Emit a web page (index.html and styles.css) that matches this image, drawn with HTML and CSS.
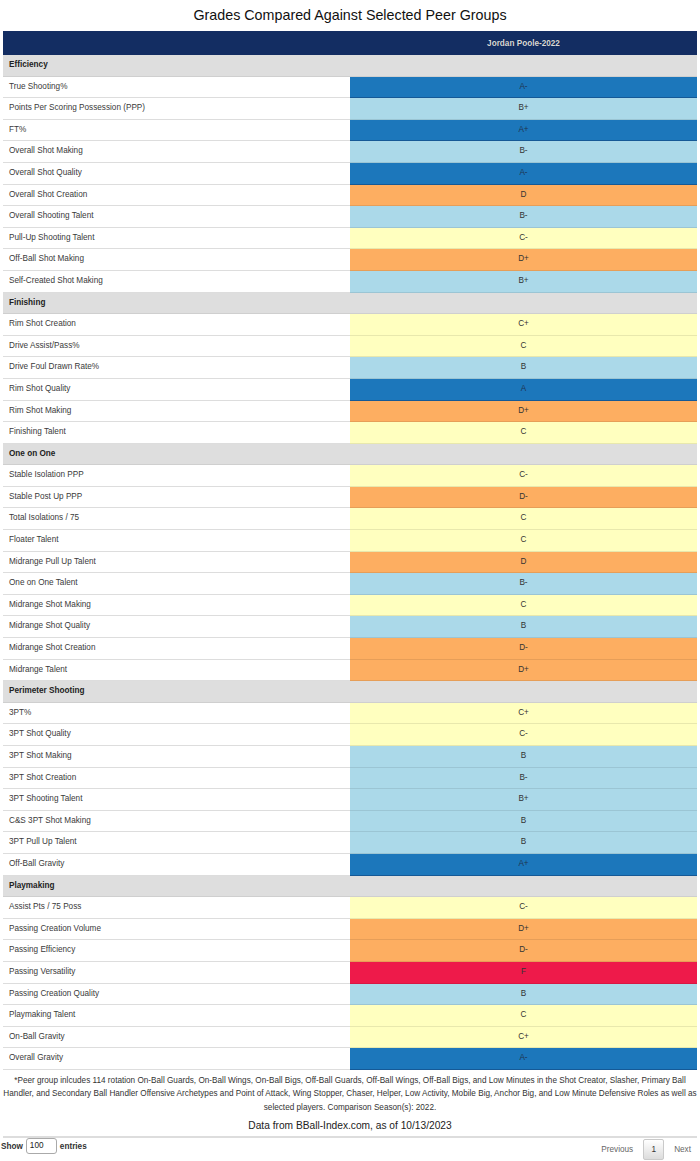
FILE: index.html
```html
<!DOCTYPE html>
<html>
<head>
<meta charset="utf-8">
<link rel="stylesheet" href="styles.css">
</head>
<body>
<div class="page">
  <h1 class="title">Grades Compared Against Selected Peer Groups</h1>
  <table class="grades">
    <thead>
      <tr><th class="h-metric"></th><th class="h-player">Jordan Poole-2022</th></tr>
    </thead>
    <tbody>
      <tr class="section"><td colspan="2">Efficiency</td></tr>
      <tr><td class="metric">True Shooting%</td><td class="g ga">A-</td></tr>
      <tr><td class="metric">Points Per Scoring Possession (PPP)</td><td class="g gb">B+</td></tr>
      <tr><td class="metric">FT%</td><td class="g ga">A+</td></tr>
      <tr><td class="metric">Overall Shot Making</td><td class="g gb">B-</td></tr>
      <tr><td class="metric">Overall Shot Quality</td><td class="g ga">A-</td></tr>
      <tr><td class="metric">Overall Shot Creation</td><td class="g gd">D</td></tr>
      <tr><td class="metric">Overall Shooting Talent</td><td class="g gb">B-</td></tr>
      <tr><td class="metric">Pull-Up Shooting Talent</td><td class="g gc">C-</td></tr>
      <tr><td class="metric">Off-Ball Shot Making</td><td class="g gd">D+</td></tr>
      <tr><td class="metric">Self-Created Shot Making</td><td class="g gb">B+</td></tr>

      <tr class="section"><td colspan="2">Finishing</td></tr>
      <tr><td class="metric">Rim Shot Creation</td><td class="g gc">C+</td></tr>
      <tr><td class="metric">Drive Assist/Pass%</td><td class="g gc">C</td></tr>
      <tr><td class="metric">Drive Foul Drawn Rate%</td><td class="g gb">B</td></tr>
      <tr><td class="metric">Rim Shot Quality</td><td class="g ga">A</td></tr>
      <tr><td class="metric">Rim Shot Making</td><td class="g gd">D+</td></tr>
      <tr><td class="metric">Finishing Talent</td><td class="g gc">C</td></tr>

      <tr class="section"><td colspan="2">One on One</td></tr>
      <tr><td class="metric">Stable Isolation PPP</td><td class="g gc">C-</td></tr>
      <tr><td class="metric">Stable Post Up PPP</td><td class="g gd">D-</td></tr>
      <tr><td class="metric">Total Isolations / 75</td><td class="g gc">C</td></tr>
      <tr><td class="metric">Floater Talent</td><td class="g gc">C</td></tr>
      <tr><td class="metric">Midrange Pull Up Talent</td><td class="g gd">D</td></tr>
      <tr><td class="metric">One on One Talent</td><td class="g gb">B-</td></tr>
      <tr><td class="metric">Midrange Shot Making</td><td class="g gc">C</td></tr>
      <tr><td class="metric">Midrange Shot Quality</td><td class="g gb">B</td></tr>
      <tr><td class="metric">Midrange Shot Creation</td><td class="g gd">D-</td></tr>
      <tr><td class="metric">Midrange Talent</td><td class="g gd">D+</td></tr>

      <tr class="section"><td colspan="2">Perimeter Shooting</td></tr>
      <tr><td class="metric">3PT%</td><td class="g gc">C+</td></tr>
      <tr><td class="metric">3PT Shot Quality</td><td class="g gc">C-</td></tr>
      <tr><td class="metric">3PT Shot Making</td><td class="g gb">B</td></tr>
      <tr><td class="metric">3PT Shot Creation</td><td class="g gb">B-</td></tr>
      <tr><td class="metric">3PT Shooting Talent</td><td class="g gb">B+</td></tr>
      <tr><td class="metric">C&amp;S 3PT Shot Making</td><td class="g gb">B</td></tr>
      <tr><td class="metric">3PT Pull Up Talent</td><td class="g gb">B</td></tr>
      <tr><td class="metric">Off-Ball Gravity</td><td class="g ga">A+</td></tr>

      <tr class="section"><td colspan="2">Playmaking</td></tr>
      <tr><td class="metric">Assist Pts / 75 Poss</td><td class="g gc">C-</td></tr>
      <tr><td class="metric">Passing Creation Volume</td><td class="g gd">D+</td></tr>
      <tr><td class="metric">Passing Efficiency</td><td class="g gd">D-</td></tr>
      <tr><td class="metric">Passing Versatility</td><td class="g gf">F</td></tr>
      <tr><td class="metric">Passing Creation Quality</td><td class="g gb">B</td></tr>
      <tr><td class="metric">Playmaking Talent</td><td class="g gc">C</td></tr>
      <tr><td class="metric">On-Ball Gravity</td><td class="g gc">C+</td></tr>
      <tr><td class="metric">Overall Gravity</td><td class="g ga">A-</td></tr>
    </tbody>
  </table>
  <p class="note">*Peer group inlcudes 114 rotation On-Ball Guards, On-Ball Wings, On-Ball Bigs, Off-Ball Guards, Off-Ball Wings, Off-Ball Bigs, and Low Minutes in the Shot Creator, Slasher, Primary Ball Handler, and Secondary Ball Handler Offensive Archetypes and Point of Attack, Wing Stopper, Chaser, Helper, Low Activity, Mobile Big, Anchor Big, and Low Minute Defensive Roles as well as selected players. Comparison Season(s): 2022.</p>
  <p class="source">Data from BBall-Index.com, as of 10/13/2023</p>
  <div class="controls">
    <div class="length">Show <span class="len-input">100</span> entries</div>
    <div class="paging">
      <span class="pg-link">Previous</span>
      <span class="pg-btn">1</span>
      <span class="pg-link">Next</span>
    </div>
  </div>
</div>
</body>
</html>
```

FILE: styles.css
```css
html, body {
  margin: 0;
  padding: 0;
  background: #ffffff;
}
body {
  font-family: "Liberation Sans", Arial, sans-serif;
  color: #333333;
}
.page {
  padding: 0 3px;
}
.title {
  margin: 0;
  height: 31px;
  line-height: 30px;
  font-size: 14.3px;
  font-weight: normal;
  text-align: center;
  color: #111111;
}
.grades {
  width: 100%;
  border-collapse: separate;
  border-spacing: 0;
  table-layout: fixed;
}
.grades th {
  height: 24px;
  padding: 0;
  background: #132d62;
  color: #d8d8d8;
  font-size: 8.2px;
  font-weight: bold;
  text-align: center;
  text-shadow: 0 0 1px rgba(0,0,0,0.4);
}
.grades th.h-metric,
.grades td.metric {
  width: 347px;
}
.grades td {
  padding: 5px 0 5px 6px;
  line-height: 10.6px;
  font-size: 8.2px;
  border-bottom: 1px solid #dddddd;
  color: #3a3a3a;
  white-space: nowrap;
}
.grades tr.section td {
  background: #dedede;
  font-weight: bold;
  color: #222222;
  border-bottom: 1px solid #cfcfcf;
}
.grades td.g {
  padding-left: 0;
  text-align: center;
  color: #333333;
  border-bottom: 1px solid rgba(0,0,0,0.09);
}
.ga { background: #1c77bb; }
.gb { background: #abd9e9; }
.gc { background: #ffffbf; }
.gd { background: #fdae61; }
.gf { background: #ee1a4a; }
.grades td.ga { color: #1f3550; border-bottom-color: rgba(0,0,40,0.25); }
.note {
  margin: 4px 0 0;
  font-size: 8.2px;
  line-height: 13.5px;
  text-align: center;
  color: #333333;
}
.source {
  margin: 5px 0 0;
  font-size: 10.2px;
  line-height: 14px;
  text-align: center;
  color: #222222;
}
.controls {
  margin: 3px 0 0;
  border-top: 2px solid #dddddd;
  display: flex;
  justify-content: space-between;
  align-items: flex-start;
  height: 24px;
  font-size: 8.2px;
  color: #333333;
}
.length {
  margin-left: -2px;
  display: flex;
  align-items: center;
  gap: 3px;
  height: 16px;
  font-weight: bold;
}
.len-input {
  display: inline-block;
  box-sizing: border-box;
  width: 31px;
  height: 16px;
  line-height: 14px;
  padding-left: 3px;
  border: 1px solid #aaaaaa;
  border-radius: 3px;
  font-weight: normal;
  background: #ffffff;
  color: #222222;
}
.paging {
  display: flex;
  align-items: center;
  gap: 10px;
  margin-top: 1px;
  margin-right: 6px;
  color: #666666;
}
.pg-btn {
  display: inline-block;
  box-sizing: border-box;
  width: 21px;
  height: 21px;
  line-height: 19px;
  text-align: center;
  border: 1px solid #cacaca;
  border-radius: 2px;
  background: linear-gradient(to bottom, #ffffff 0%, #dcdcdc 100%);
  color: #333333;
}
```
